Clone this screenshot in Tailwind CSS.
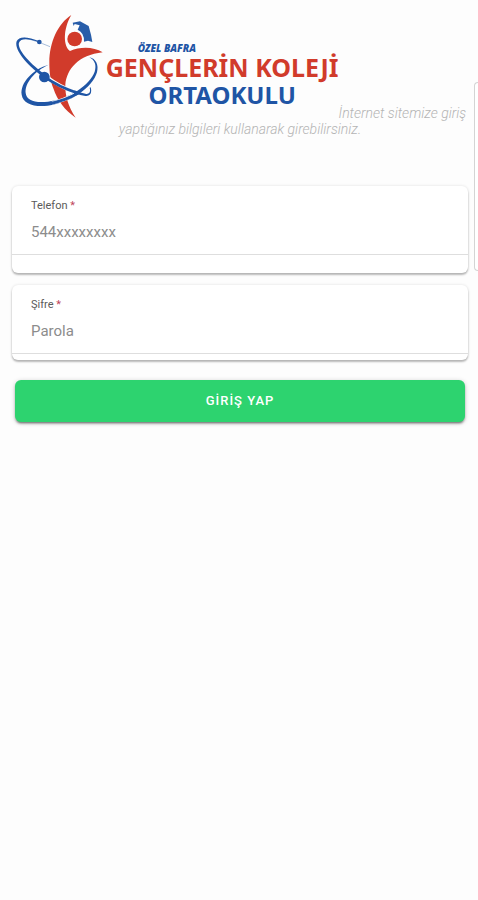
<!DOCTYPE html>
<html lang="tr">
<head>
<meta charset="utf-8">
<meta name="viewport" content="width=device-width, initial-scale=1">
<title>Giriş</title>
<script src="https://cdn.jsdelivr.net/npm/@tailwindcss/browser@4"></script>
</head>
<body class="min-h-screen bg-[#fdfdfd] font-[Roboto,sans-serif]">
<main class="relative pt-3.5 pr-2.5 pl-3">
  <!-- Edge of the next slide -->
  <div class="absolute top-[82px] right-0 h-[189px] w-1 rounded-l border border-r-0 border-[#d4d4d4] bg-white"></div>

  <header class="min-h-[172px] text-center text-sm leading-4 font-light text-[#b4b4b4] italic">
    <h1 class="inline-flex items-start align-baseline not-italic">
      <svg class="h-[104px] w-[92px] shrink-0" viewBox="42 42 276 312" fill="none" aria-hidden="true">
        <path d="M150 140Q100 119 72 114" stroke="#a9bedb" stroke-width="3"/>
        <path d="M118 124C86 111 57 106 50 124C41 148 82 198 133 233C173 261 216 280 256 288C270 290 277 280 272 262L269 263C273 277 267 284 256 281C218 273 175 253 139 226C88 190 51 147 57 128C62 114 85 115 118 127Z" fill="#1f55a5"/>
        <path d="M146 194C99 207 60 248 65 284C69 311 102 322 143 317C211 309 278 263 291 217C297 195 288 176 268 172C285 181 290 196 284 215C270 256 205 297 144 305C105 310 79 301 77 279C74 249 104 213 146 194Z" fill="#1f55a5"/>
        <circle cx="118" cy="126" r="7" fill="#1f55a5"/>
        <path d="M214 45C174 71 148 126 148 188C148 218 152 245 160 265C172 301 195 332 227 353C204 318 195 286 196 254C200 208 235 165 308 157C281 140 242 139 210 153C190 139 188 89 214 45Z" fill="#d13b2b"/>
        <path d="M142 232Q176 258 222 275M156 309Q192 301 224 283" stroke="#fff" stroke-width="11"/>
        <path d="M133 230Q176 261 230 278M145 311Q192 304 235 279" stroke="#1f55a5" stroke-width="8"/>
        <circle cx="133" cy="231" r="16" fill="#1f55a5"/>
        <circle cx="224" cy="117" r="22" fill="#d13b2b"/>
        <path d="M218 68L240 64L266 78L273 104L277 126L264 122L252 125Q253 98 233 89L239 76L224 72L221 78Z" fill="#285da9"/>
      </svg>
      <span class="flex flex-col items-center pt-7 font-['Noto_Sans',sans-serif] leading-[27px] font-bold">
        <span class="self-start pl-8 text-[10px] leading-3 font-black text-[#1f55a5] italic">ÖZEL BAFRA</span>
        <span class="text-[25px] text-[#d13b2b]">GENÇLERİN KOLEJİ</span>
        <span class="text-2xl leading-[27px] text-[#1f55a5]">ORTAOKULU</span>
      </span>
    </h1><span>İnternet sitemize giriş yaptığınız bilgileri kullanarak girebilirsiniz.</span>
  </header>

  <form class="flex flex-col" onsubmit="return false">
    <div class="mb-3 rounded-md bg-white pt-3 pb-[18px] shadow-[0_0_3px_#0000001f,0_2px_2px_#00000040]">
      <div class="flex flex-col border-b border-[#dedede] px-[19px] pb-2">
        <label for="tel" class="text-[11px] leading-4 text-[#5a5a5a]">Telefon <span class="text-[#c0445c]">*</span></label>
        <input id="tel" type="tel" placeholder="544xxxxxxxx" class="mt-1 h-7 w-full bg-transparent text-[15px] text-[#444] outline-none placeholder:text-[#8c8c8c]">
      </div>
    </div>
    <div class="mb-5 rounded-md bg-white pt-3 pb-1.5 shadow-[0_0_3px_#0000001f,0_2px_2px_#00000040]">
      <div class="flex flex-col border-b border-[#dedede] px-[19px] pb-2">
        <label for="pass" class="text-[11px] leading-4 text-[#5a5a5a]">Şifre <span class="text-[#c0445c]">*</span></label>
        <input id="pass" type="password" placeholder="Parola" class="mt-1 h-7 w-full bg-transparent text-[15px] text-[#444] outline-none placeholder:text-[#8c8c8c]">
      </div>
    </div>
    <button type="submit" class="mx-[3px] h-[42px] rounded-md bg-[#2dd36f] text-[13px] font-medium tracking-[1px] text-white shadow-[0_3px_1px_-2px_#00000033,0_2px_2px_#00000040,0_1px_5px_#00000033]">GİRİŞ YAP</button>
  </form>
</main>
</body>
</html>
